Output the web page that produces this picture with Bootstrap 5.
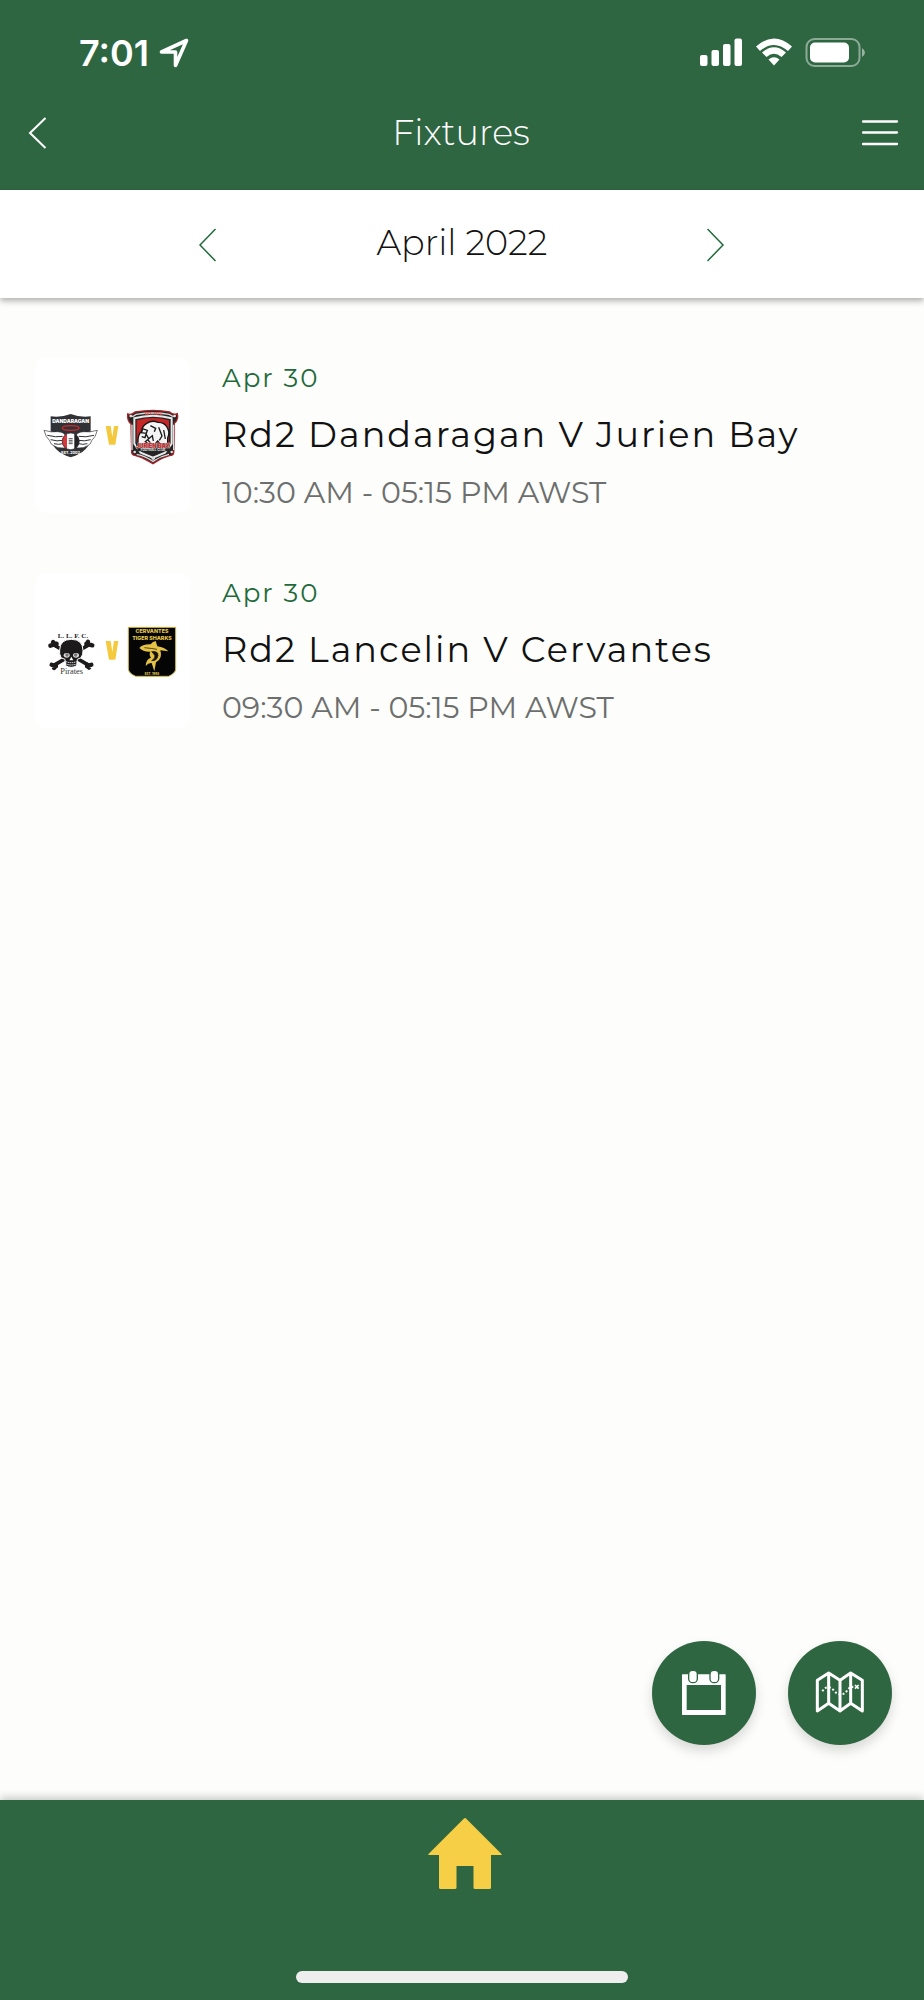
<!DOCTYPE html>
<html lang="en">
<head>
<meta charset="utf-8">
<meta name="viewport" content="width=device-width, initial-scale=1">
<title>Fixtures</title>
<link href="https://cdn.jsdelivr.net/npm/bootstrap@5.3.0/dist/css/bootstrap.min.css" rel="stylesheet">
<style>
  :root { --club-green: #2f6642; --club-gold: #f6cf47; }
  body { font-family: Montserrat, Inter, "Open Sans", sans-serif; background: #fdfdfc; color: #111; }
  svg { display: block; }
  .club-bar { background: var(--club-green); color: #fff; }
  .status-row { height: 104px; padding: 2px 59px 0 79px; }
  .clock { font-family: Inter, sans-serif; font-size: 36px; line-height: 40px; font-weight: 600; }
  .title-row { height: 86px; padding: 0 22px 28px 24px; }
  .screen-title { font-size: 35px; line-height: 44px; font-weight: 300; }
  .bare-btn { background: none; border: 0; padding: 0; color: inherit; }
  .month-bar { height: 108px; padding-top: 2px; background: #fff; box-shadow: 0 3px 6px rgba(0,0,0,.3); z-index: 1; }
  .month-picker { width: 57%; }
  .month-name { font-size: 35px; line-height: 44px; font-weight: 300; padding-bottom: 4px; }
  .month-btn { color: #1f6a3a; }
  .fixture-list { padding: 60px 35px; gap: 59px; }
  .fixture { gap: 32px; color: inherit; }
  .versus { width: 155px; height: 155px; border-radius: 10px; background: #fff; }
  .versus text { font-family: Inter, sans-serif; text-anchor: middle; }
  .fixture-date { font-size: 26px; line-height: 40px; letter-spacing: 2px; font-weight: 400; color: #1f6a3a; }
  .fixture-name { font-size: 35px; line-height: 74px; letter-spacing: 2px; font-weight: 400; }
  .fixture-time { font-size: 30px; line-height: 42px; font-weight: 400; color: #6c6f6d; }
  .fab-row { gap: 32px; padding: 0 32px 55px; }
  .fab { width: 104px; height: 104px; border: 0; padding: 0; border-radius: 50%; background: var(--club-green); color: #fff; box-shadow: 0 6px 12px rgba(0,0,0,.15); }
  .tab-bar { height: 200px; padding: 18px 0 17px; box-shadow: 0 -3px 8px rgba(0,0,0,.2); }
  .home-link { color: var(--club-gold); }
  .home-strip { width: 36%; height: 12px; border-radius: 6px; background: #eee; }
</style>
</head>
<body>
<div class="d-flex flex-column min-vh-100">
  <header class="club-bar">
    <div class="status-row d-flex align-items-center justify-content-between">
      <div class="d-flex align-items-center gap-2">
        <span class="clock">7:01</span>
        <svg width="34" height="32" viewBox="-1 0 34 32" fill="none" stroke="#fff" stroke-width="3.600" stroke-linejoin="round"><path d="M28.500 3.500 3.500 15H17.500V28.500z"/></svg>
      </div>
      <div class="d-flex align-items-center">
        <svg width="166" height="30" viewBox="0 0 166 30" fill="#fff">
          <rect x="1" y="17" width="7.500" height="11" rx="2"/><rect x="12.500" y="12" width="7.500" height="16" rx="2"/><rect x="24" y="6" width="7.500" height="22" rx="2"/><rect x="35.500" y="0.500" width="7.500" height="27.500" rx="2"/>
          <path d="M57 8.500Q75-7.500 93 8.500l-4 4.500Q75 1 61 13z"/><path d="M63 14.500q12-10.500 24 0l-4.500 4.500Q75 12.500 67.500 19z"/><path d="M69.500 21.500q5.500-4.500 11 0L75 27.500z"/>
          <rect x="107.500" y="1" width="53" height="27" rx="8" fill="none" stroke="#fff" stroke-opacity=".45" stroke-width="2"/>
          <rect x="111" y="4.500" width="39" height="20" rx="5"/><path d="M163 10q6 4.500 0 9z" opacity=".5"/>
        </svg>
      </div>
    </div>
    <div class="title-row d-flex align-items-center justify-content-between">
      <button class="bare-btn" type="button" aria-label="Back"><svg width="36" height="34" viewBox="0 0 36 34" fill="none" stroke="currentColor" stroke-width="2"><path d="M21.500 2 6 17l15.500 15"/></svg></button>
      <h1 class="screen-title mb-0">Fixtures</h1>
      <button class="bare-btn" type="button" aria-label="Menu"><svg width="40" height="30" viewBox="0 0 40 30" stroke="currentColor" stroke-width="2.300" stroke-linecap="round"><path d="M1 3.500h34M1 14.500h34M1 26h34"/></svg></button>
    </div>
  </header>
  <nav class="month-bar position-relative d-flex align-items-center justify-content-center" aria-label="Month">
    <div class="month-picker d-flex align-items-center justify-content-between">
      <button class="bare-btn month-btn" type="button" aria-label="Previous month"><svg width="18" height="34" viewBox="0 0 18 34" fill="none" stroke="currentColor" stroke-width="1.500"><path d="M16.500 1 1 17l15.500 16"/></svg></button>
      <h2 class="month-name mb-0">April 2022</h2>
      <button class="bare-btn month-btn" type="button" aria-label="Next month"><svg width="18" height="34" viewBox="0 0 18 34" fill="none" stroke="currentColor" stroke-width="1.500"><path d="m0.500 1 15.500 16L.5 33"/></svg></button>
    </div>
  </nav>
  <main class="flex-grow-1 d-flex flex-column">
    <div class="fixture-list d-flex flex-column">
      <a class="fixture d-flex text-decoration-none" href="#dandaragan-jurien-bay">
        <div class="versus flex-shrink-0">
          <svg width="155" height="155" viewBox="15 24 465 465" role="img" aria-label="Dandaragan versus Jurien Bay">
            <!-- Dandaragan: winged shield -->
            <path d="M62 199q32 4 60-7 28 11 60 7v62q0 42-60 61-58-19-60-61z" fill="#303236"/>
            <text x="122" y="219" font-size="15" font-weight="900" fill="#fff">DANDARAGAN</text>
            <ellipse cx="122" cy="234" rx="25" ry="7" fill="none" stroke="#c92c31" stroke-width="4"/>
            <g id="wing">
              <path d="M42 241q24 7 40 4 26 0 26 21l-4 28q-22 2-33-7-10-4-12-15-12-10-17-31z" fill="#fff" stroke="#303236" stroke-width="2"/>
              <path d="M52 256q26 7 46 3M62 269q20 6 36 2M72 281q14 4 26 0" fill="none" stroke="#303236" stroke-width="3"/>
            </g>
            <use href="#wing" transform="matrix(-1 0 0 1 244 0)"/>
            <circle cx="122" cy="274" r="25" fill="#fff"/>
            <path d="M111 251a25 25 0 0 0 0 46z" fill="#d5393d"/><path d="M133 251a25 25 0 0 1 0 46z" fill="#222"/>
            <path d="M116 266h12M116 271h12M116 276h12M116 281h12" stroke="#555" stroke-width="3"/>
            <circle cx="122" cy="274" r="25" fill="none" stroke="#303236" stroke-width="2"/>
            <text x="122" y="311" font-size="11" font-weight="800" fill="#fff">EST. 2002</text>
            <path d="M227 228h15l5 33 5-33h13l-9 56h-19z" fill="#f4c93e"/>
            <!-- Jurien Bay: bulldog shield -->
            <path d="M293 192q13 4 22-6 56-10 104 0 10 10 23 5 4 19-9 29 1 52-2 88 0 8-13 9-20 6-38 17l-11 7-12-7q-18-12-40-17-13-2-12-12-1-44-2-84-12-8-10-29z" fill="#252525" stroke="#a82227" stroke-width="4"/>
            <path d="M302 200q9 0 17-7 50-8 98 0 8 6 17 7M306 224v76M431 224v76M320 313q25 5 49 21 24-16 48-21" fill="none" stroke="#ddd" stroke-width="4"/>
            <path d="M313 205q56-16 112 0v76l-20 27-36 15-37-15-19-27z" fill="#252525" stroke="#e9e9e9" stroke-width="6"/>
            <path d="M320 211q50-14 97 0v64q-10 17-19 21h-59l-19-21z" fill="#c62626"/>
            <path d="M324 280q-2-27 12-37-1-14 14-23 16-11 34-3 22 0 29 18 7 13 0 29v19h-21l-9-10-14 15-20-10-12 13z" fill="#f4f4f4" stroke="#151515" stroke-width="4"/>
            <path d="M337 236l15 5-3 9-15-2zM361 227l16 8-4 10M386 232l10 26-8 13M335 260l10 3 3-11 8 14 11-9 3 16M344 277l9-8 8 10M401 240l5 27" fill="none" stroke="#181818" stroke-width="4"/>
            <path d="M317 280h104l-5 24h-93z" fill="#252525"/>
            <text x="369" y="294" font-size="17" font-weight="900" fill="#c62b2d" stroke="#eee" stroke-width="2" paint-order="stroke">JURIEN BAY</text>
            <text x="369" y="304" font-size="9" font-weight="700" fill="#eee">FOOTBALL CLUB</text>
            <text x="370" y="195" font-size="11" font-weight="800" fill="#e15454">EST. 1973</text>
            <circle cx="302" cy="198" r="4" fill="#ddd"/><circle cx="434" cy="198" r="4" fill="#ddd"/><circle cx="314" cy="306" r="4" fill="#ddd"/><circle cx="425" cy="306" r="4" fill="#ddd"/><circle cx="370" cy="325" r="5" fill="#ddd"/>
          </svg>
        </div>
        <div><div class="fixture-date">Apr 30</div><div class="fixture-name">Rd2 Dandaragan V Jurien Bay</div><div class="fixture-time">10:30 AM - 05:15 PM AWST</div></div>
      </a>
      <a class="fixture d-flex text-decoration-none" href="#lancelin-cervantes">
        <div class="versus flex-shrink-0">
          <svg width="155" height="155" viewBox="15 21 465 465" role="img" aria-label="Lancelin versus Cervantes">
            <!-- Lancelin: skull and crossbones -->
            <text x="129" y="216" font-size="21" font-weight="800" style="font-family:'Liberation Serif',serif" fill="#222">L. L. F. C.</text>
            <g fill="none" stroke="#1c1a1b" stroke-linecap="round"><path d="M72 237 178 299M176 237 70 299" stroke-width="11"/><path d="M61 239l19-6M69 228l9 10M187 238l-18-5M174 227l-5 10M65 296l13 5M72 306l6-9M184 296l-13 5M177 305l-6-9" stroke-width="13"/></g>
            <path d="M89 252q1-32 35-32t35 33q1 13-6 22l-11 5-2 19q-16 10-33 0l-2-19-12-5q-6-12-4-23z" fill="#1c1a1b" stroke="#fff" stroke-width="3"/>
            <ellipse cx="110" cy="268" rx="9" ry="7" fill="#ddd"/><ellipse cx="138" cy="268" rx="9" ry="7" fill="#ddd"/>
            <circle cx="111" cy="267" r="5" fill="#777"/><circle cx="137" cy="267" r="5" fill="#777"/>
            <path d="M124 272l6 11h-12z" fill="#fff"/><path d="M108 287q16 6 32 0M109 294q15 6 30 0" fill="none" stroke="#fff" stroke-width="3" stroke-dasharray="4 2"/>
            <text x="125" y="325" font-size="25" font-weight="400" style="font-family:'Liberation Serif',serif" fill="#333">Pirates</text>
            <path d="M227 225h15l5 33 5-33h13l-9 56h-19z" fill="#f4c93e"/>
            <!-- Cervantes: shark crest -->
            <path d="M295 184h142v125q0 12-21 22H317q-21-9-22-22z" fill="#050505" stroke="#cdb94a" stroke-width="3"/>
            <text x="366" y="202" font-size="16" font-weight="800" fill="#e6c94c">CERVANTES</text>
            <text x="366" y="222" font-size="16" font-weight="800" fill="#e6c94c">TIGER SHARKS</text>
            <path d="M328 246q10-12 34-11 4-8 15-10l5 16q22 3 33 15l-24-3q8 25-13 36l-5 27-8-25q-10-1-18 9 1-21 16-25-7-9-2-18-22 1-33-11z" fill="#e3c247"/>
            <path d="M365 257q20-3 19 12-3 16-19 15 13-8 9-16-3-5-9-11zM343 245q22 2 38 5" fill="#171305" stroke="#171305" stroke-width="2"/>
            <text x="366" y="326" font-size="9" font-weight="800" fill="#e6c94c">EST. 1985</text>
          </svg>
        </div>
        <div><div class="fixture-date">Apr 30</div><div class="fixture-name">Rd2 Lancelin V Cervantes</div><div class="fixture-time">09:30 AM - 05:15 PM AWST</div></div>
      </a>
    </div>
    <div class="fab-row d-flex justify-content-end mt-auto">
      <button class="fab" type="button" aria-label="Calendar">
        <svg width="104" height="104" viewBox="66 63 312 312"><path d="M158 163h127q2 0 2 2v118q0 2-2 2H158q-2 0-2-2V165q0-2 2-2zM170 195v75h103v-75z" fill="#fff" fill-rule="evenodd"/><g fill="#fff" stroke="#2f6642" stroke-width="4"><rect x="176" y="151" width="26" height="37" rx="12"/><rect x="240" y="151" width="26" height="37" rx="12"/></g></svg>
      </button>
      <button class="fab" type="button" aria-label="Map">
        <svg width="104" height="104" viewBox="474 63 312 312" fill="none" stroke="#fff" stroke-linejoin="round"><path d="M562 181l34-22 34 22 32-22 35 22v92l-35-23-32 23-34-23-34 23zM596 159v91M630 181v92M662 159v91" stroke-width="9"/><path d="M577 214q7-13 19-12 9 1 15 9 10 13 21 12 12 0 19-11 7-11 19-12" stroke-width="6" stroke-dasharray="6 6"/><path d="m675 195 11 11m0-11-11 11" stroke-width="5"/></svg>
      </button>
    </div>
  </main>
  <footer class="club-bar tab-bar d-flex flex-column align-items-center justify-content-between">
    <a class="home-link" href="#home" aria-label="Home"><svg width="80" height="72" viewBox="-6 0 80 72" fill="currentColor"><path d="M36 .5q1-1 2 0L73.500 36q.8 1-.5 1H63v32.500q0 1.500-1.500 1.500H47q-1.500 0-1.500-1.500V48H28.500v21.500q0 1.500-1.500 1.500H12.500Q11 71 11 69.500V37H1q-1.300 0-.5-1z"/></svg></a>
    <div class="home-strip"></div>
  </footer>
</div>
<script src="https://cdn.jsdelivr.net/npm/bootstrap@5.3.0/dist/js/bootstrap.bundle.min.js"></script>
</body>
</html>
